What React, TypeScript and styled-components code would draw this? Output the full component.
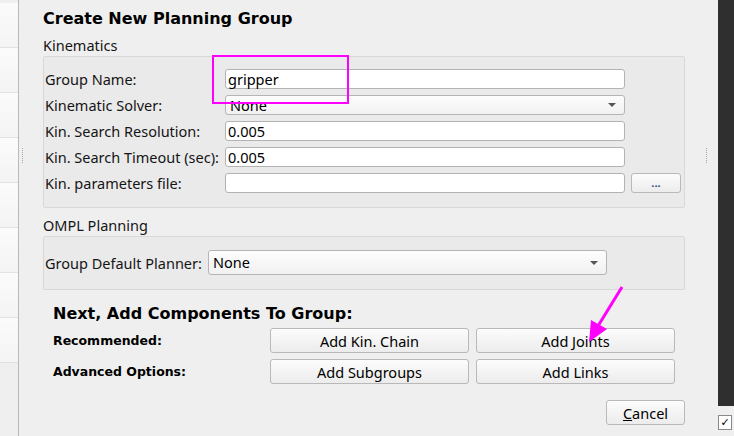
import React from "react";
import styled, { createGlobalStyle } from "styled-components";

const Global = createGlobalStyle`
  html, body { margin: 0; padding: 0; background: #efefef; }
  #root { width: 734px; height: 436px; overflow: hidden; }
`;

const BODY_FONT = `"Noto Sans", "Open Sans", sans-serif`;
const BOLD_FONT = `"DejaVu Sans", "Noto Sans", sans-serif`;

const Page = styled.div`
  position: relative;
  display: flex;
  width: 734px;
  height: 436px;
  background: #efefef;
  font-family: ${BODY_FONT};
  font-size: 14.5px;
  color: #151515;
`;

const Sidebar = styled.div`
  width: 18px;
  border-right: 1px solid #b9b9b9;
  display: flex;
  flex-direction: column;
  padding-top: 3px;
  background: #efefef;
`;

const SideRow = styled.div`
  height: 44px;
  border-bottom: 1px solid #e2e2e2;
  background: linear-gradient(#fbfbfb, #f4f4f4);
`;

const Handle = styled.div<{ $w: number; $off: number }>`
  width: ${(p) => p.$w}px;
  box-sizing: border-box;
  display: flex;
  justify-content: flex-start;
  padding-left: ${(p) => p.$off}px;
  padding-top: 148px;
`;

const Dots = styled.div`
  width: 1px;
  height: 16px;
  background-image: linear-gradient(#a8a8a8 50%, transparent 50%);
  background-size: 1px 2px;
`;

const Content = styled.div`
  flex: 1;
  padding: 0 17px 0 16px;
  display: flex;
  flex-direction: column;
`;

const Title = styled.div`
  font-family: ${BOLD_FONT};
  font-weight: bold;
  font-size: 16px;
  line-height: 19px;
  margin-top: 9px;
  color: #000;
`;

const SectionLabel = styled.div<{ $top: number }>`
  font-size: 14.5px;
  line-height: 18px;
  margin-top: ${(p) => p.$top}px;
  margin-bottom: 2px;
`;

const GroupBox = styled.div<{ $pad: string; $cols: string }>`
  border: 1px solid #d8d8d8;
  border-radius: 2px;
  background: #eaeaea;
  padding: ${(p) => p.$pad};
  display: grid;
  grid-template-columns: ${(p) => p.$cols};
  column-gap: 6px;
  row-gap: 6px;
  align-items: center;
`;

const FieldLabel = styled.div`
  white-space: nowrap;
  font-size: 14.5px;
  line-height: 18px;
`;

const Input = styled.div`
  height: 18px;
  background: #fff;
  border: 1px solid #b3b3b3;
  border-radius: 3px;
  padding: 0 2px;
  line-height: 18px;
  font-size: 14.5px;
  color: #000;
`;

const Combo = styled.div<{ $h: number }>`
  height: ${(p) => p.$h - 2}px;
  line-height: ${(p) => p.$h - 2}px;
  border: 1px solid #b5b5b5;
  border-radius: 3px;
  background: linear-gradient(#fdfdfd, #f1f1f1);
  padding: 0 4px;
  display: flex;
  align-items: center;
  justify-content: space-between;
  color: #000;
`;

const Arrow = styled.span`
  width: 0;
  height: 0;
  border-left: 4px solid transparent;
  border-right: 4px solid transparent;
  border-top: 4px solid #555;
  margin-right: 4px;
`;

const Button = styled.button<{ $w?: number }>`
  height: 25px;
  ${(p) => (p.$w ? `width: ${p.$w}px;` : "")}
  border: 1px solid #b9b9b9;
  border-radius: 3px;
  background: linear-gradient(#fcfcfc, #ececec);
  font-family: ${BODY_FONT};
  font-size: 14.5px;
  line-height: 20px;
  color: #000;
  padding: 0;
  cursor: default;
`;

const SmallButton = styled(Button)`
  height: 20px;
  font-size: 11px;
  line-height: 10px;
  font-weight: bold;
  color: #2a4a80;
`;

const NextTitle = styled.div`
  font-family: ${BOLD_FONT};
  font-weight: bold;
  font-size: 16px;
  line-height: 19px;
  margin: 14px 0 0 10px;
  color: #000;
`;

const ActionGrid = styled.div`
  display: grid;
  grid-template-columns: 210px 199px 199px;
  column-gap: 7px;
  row-gap: 6px;
  align-items: center;
  margin: 5px 0 0 10px;
`;

const BoldLabel = styled.div`
  font-family: ${BOLD_FONT};
  font-weight: bold;
  font-size: 12.5px;
  color: #000;
`;

const Footer = styled.div`
  display: flex;
  justify-content: flex-end;
  margin-top: 16px;
`;

const RightCol = styled.div`
  width: 16px;
  display: flex;
  flex-direction: column;
`;

const DarkPanel = styled.div`
  height: 406px;
  background: #2f2f2f;
`;

const Check = styled.div`
  margin-top: 9px;
  width: 12px;
  height: 13px;
  border: 1px solid #8a8a8a;
  background: #fff;
  font-size: 11px;
  line-height: 13px;
  text-align: center;
  color: #000;
  font-family: "DejaVu Sans", sans-serif;
`;

const Highlight = styled.div`
  position: absolute;
  left: 212px;
  top: 55px;
  width: 133px;
  height: 45px;
  border: 2px solid #ff00ff;
  pointer-events: none;
`;

const Overlay = styled.svg`
  position: absolute;
  left: 0;
  top: 0;
  pointer-events: none;
`;

const Underline = styled.span`
  text-decoration: underline;
`;

export default function App() {
  const rows = Array.from({ length: 8 });
  return (
    <>
      <Global />
      <Page>
        <Sidebar>
          {rows.map((_, i) => (
            <SideRow key={i} />
          ))}
        </Sidebar>
        <Handle $w={8} $off={3}>
          <Dots />
        </Handle>
        <Content>
          <Title>Create New Planning Group</Title>
          <SectionLabel $top={8}>Kinematics</SectionLabel>
          <GroupBox $pad="12px 2px 14px 1px" $cols="174px 400px 50px">
            <FieldLabel>Group Name:</FieldLabel>
            <Input>gripper</Input>
            <span />
            <FieldLabel>Kinematic Solver:</FieldLabel>
            <Combo $h={20}>
              None
              <Arrow />
            </Combo>
            <span />
            <FieldLabel>Kin. Search Resolution:</FieldLabel>
            <Input>0.005</Input>
            <span />
            <FieldLabel>Kin. Search Timeout (sec):</FieldLabel>
            <Input>0.005</Input>
            <span />
            <FieldLabel>Kin. parameters file:</FieldLabel>
            <Input />
            <SmallButton>...</SmallButton>
          </GroupBox>
          <SectionLabel $top={8}>OMPL Planning</SectionLabel>
          <GroupBox $pad="13px 2px 14px 1px" $cols="157px 399px">
            <FieldLabel>Group Default Planner:</FieldLabel>
            <Combo $h={25}>
              None
              <Arrow />
            </Combo>
          </GroupBox>
          <NextTitle>Next, Add Components To Group:</NextTitle>
          <ActionGrid>
            <BoldLabel>Recommended:</BoldLabel>
            <Button>Add Kin. Chain</Button>
            <Button>Add Joints</Button>
            <BoldLabel>Advanced Options:</BoldLabel>
            <Button>Add Subgroups</Button>
            <Button>Add Links</Button>
          </ActionGrid>
          <Footer>
            <Button $w={79}>
              <Underline>C</Underline>ancel
            </Button>
          </Footer>
        </Content>
        <Handle $w={16} $off={4}>
          <Dots />
        </Handle>
        <RightCol>
          <DarkPanel />
          <Check>✓</Check>
        </RightCol>
        <Highlight />
        <Overlay width={734} height={436}>
          <line x1={622} y1={287} x2={598} y2={326} stroke="#ff00ff" strokeWidth={3} />
          <polygon points="589,342 591,320 607,329" fill="#ff00ff" />
        </Overlay>
      </Page>
    </>
  );
}
